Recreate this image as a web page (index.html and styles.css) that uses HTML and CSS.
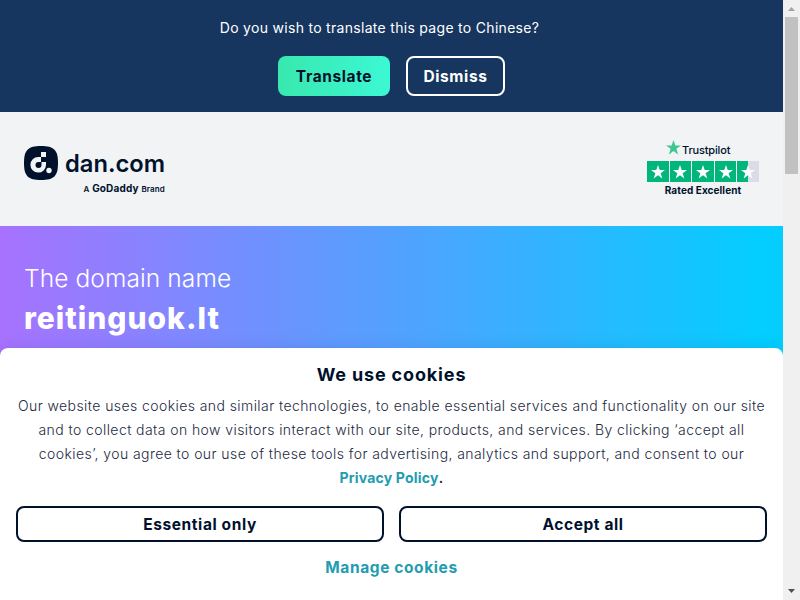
FILE: index.html
```html
<!DOCTYPE html>
<html lang="en">
<head>
    <meta charset="UTF-8">
    <meta name="viewport" content="width=device-width, initial-scale=1.0">
    <title>reitinguok.lt - dan.com</title>
    <link rel="stylesheet" href="styles.css">
</head>
<body>

<div class="page">
    <div class="translate-bar">
        <p class="translate-text">Do you wish to translate this page to Chinese?</p>
        <div class="translate-actions">
            <button class="btn btn-green">Translate</button>
            <button class="btn btn-outline-white">Dismiss</button>
        </div>
    </div>

    <header class="header">
        <a class="logo">
            <div class="logo-main">
                <svg class="logo-mark" width="34" height="34" viewBox="0 0 34 34">
                    <path d="M17 0C30 0 34 4 34 17S30 34 17 34 0 30 0 17 4 0 17 0Z" fill="#00112c"/>
                    <path d="M17 6h5v5h-5zM17 11v5h-2.500a3 3 0 1 0 3 3V16H22v3a7.800 7.800 0 1 1-7.800-8z" fill="#f1f3f5"/>
                    <circle cx="25" cy="24.500" r="2.700" fill="#f1f3f5"/>
                </svg>
                <span class="logo-name">dan.com</span>
            </div>
            <div class="logo-brand"><span>A</span> <b>GoDaddy</b> <span>Brand</span></div>
        </a>

        <div class="trustpilot">
            <div class="trustpilot-name">
                <svg width="15" height="15" viewBox="0 0 20 20"><path class="star-green" d="M10 0l2.400 7.200H20l-6.200 4.600 2.400 7.400L10 14.600l-6.200 4.600 2.400-7.400L0 7.200h7.600z"/></svg>
                <span>Trustpilot</span>
            </div>
            <div class="stars">
                <span class="star"><svg viewBox="0 0 20 20"><path d="M10 0l2.400 7.200H20l-6.200 4.600 2.400 7.400L10 14.600l-6.200 4.600 2.400-7.400L0 7.200h7.600z"/></svg></span>
                <span class="star"><svg viewBox="0 0 20 20"><path d="M10 0l2.400 7.200H20l-6.200 4.600 2.400 7.400L10 14.600l-6.200 4.600 2.400-7.400L0 7.200h7.600z"/></svg></span>
                <span class="star"><svg viewBox="0 0 20 20"><path d="M10 0l2.400 7.200H20l-6.200 4.600 2.400 7.400L10 14.600l-6.200 4.600 2.400-7.400L0 7.200h7.600z"/></svg></span>
                <span class="star"><svg viewBox="0 0 20 20"><path d="M10 0l2.400 7.200H20l-6.200 4.600 2.400 7.400L10 14.600l-6.200 4.600 2.400-7.400L0 7.200h7.600z"/></svg></span>
                <span class="star half"><svg viewBox="0 0 20 20"><path d="M10 0l2.400 7.200H20l-6.200 4.600 2.400 7.400L10 14.600l-6.200 4.600 2.400-7.400L0 7.200h7.600z"/></svg></span>
            </div>
            <div class="rated">Rated Excellent</div>
        </div>
    </header>

    <main class="hero">
        <p class="hero-label">The domain name</p>
        <h1 class="hero-domain">reitinguok.lt</h1>
    </main>

    <div class="cookies">
        <h2 class="cookies-title">We use cookies</h2>
        <p class="cookies-text">
            Our website uses cookies and similar technologies, to enable essential services and functionality on our site<br>
            and to collect data on how visitors interact with our site, products, and services. By clicking ‘accept all<br>
            cookies’, you agree to our use of these tools for advertising, analytics and support, and consent to our<br>
            <a>Privacy Policy</a><b>.</b>
        </p>
        <div class="cookies-actions">
            <button class="btn btn-cookie">Essential only</button>
            <button class="btn btn-cookie">Accept all</button>
        </div>
        <a class="manage">Manage cookies</a>
    </div>
</div>

<div class="scrollbar">
    <svg width="17" height="17" viewBox="0 0 17 17"><path d="M5 11h7L8.500 7z" fill="#a3a3a3"/></svg>
    <div class="scrollbar-thumb"></div>
    <svg class="scrollbar-down" width="17" height="17" viewBox="0 0 17 17"><path d="M5 6h7l-3.500 4z" fill="#505050"/></svg>
</div>

</body>
</html>
```
FILE: styles.css
```css
* {
    box-sizing: border-box;
}
body {
    margin: 0;
    height: 600px;
    display: flex;
    overflow: hidden;
    font-family: Inter, "Liberation Sans", sans-serif;
    color: #00112c;
}
p, h1, h2 {
    margin: 0;
}
.page {
    width: 783px;
    height: 600px;
    position: relative;
}
.translate-bar {
    height: 112px;
    padding-top: 16px;
    background-color: #16365f;
    text-align: center;
}
.translate-text {
    padding-right: 24px;
    font-size: 14px;
    line-height: 24px;
    letter-spacing: 0.300px;
    color: #fff;
}
.translate-actions {
    display: flex;
    justify-content: center;
    gap: 16px;
    margin-top: 16px;
}
.btn {
    padding: 0;
    border: 2px solid #00112c;
    border-radius: 8px;
    background: none;
    font-family: inherit;
    font-size: 15.500px;
    font-weight: 700;
    letter-spacing: 0.600px;
    color: #00112c;
}
.btn-green {
    width: 112px;
    height: 40px;
    border: none;
    background: linear-gradient(90deg, #38e8ae, #3cf8d4);
}
.btn-outline-white {
    width: 99px;
    height: 40px;
    border-color: #fff;
    color: #fff;
}
.header {
    display: flex;
    justify-content: space-between;
    height: 114px;
    padding: 28px 24px 0;
    background-color: #f1f3f5;
}
.logo {
    width: 141px;
    padding-top: 6px;
}
.logo-main {
    display: flex;
    gap: 7px;
    height: 34px;
}
.logo-mark {
    flex-shrink: 0;
}
.logo-name {
    font-size: 23.700px;
    font-weight: 600;
    line-height: 35px;
    white-space: nowrap;
}
.logo-brand {
    margin-top: 2px;
    font-size: 8px;
    font-weight: 600;
    line-height: 12px;
    letter-spacing: 0.150px;
    word-spacing: 0.600px;
    text-align: right;
    white-space: nowrap;
}
.logo-brand b {
    font-size: 10px;
    font-weight: 700;
}
.trustpilot {
    width: 112px;
}
.trustpilot-name {
    display: flex;
    gap: 1px;
    height: 21px;
    padding-left: 19px;
    font-size: 11px;
    font-weight: 500;
    line-height: 20px;
    letter-spacing: -0.150px;
}
.star-green {
    fill: #3cc78e;
}
.stars {
    display: flex;
    gap: 1px;
}
.star {
    display: flex;
    align-items: center;
    justify-content: center;
    width: 21.600px;
    height: 21px;
    background-color: #00b67a;
}
.star svg {
    width: 14px;
    height: 14px;
    fill: #fff;
}
.star.half {
    background: linear-gradient(90deg, #00b67a 50%, #dcdce6 50%);
}
.rated {
    font-size: 10px;
    font-weight: 700;
    line-height: 16px;
    letter-spacing: 0.080px;
    text-align: center;
    white-space: nowrap;
}
.hero {
    height: 374px;
    padding: 36px 24px;
    background: linear-gradient(90deg, #a772ff 0%, #04cdff 97%);
    color: #fff;
}
.hero-label {
    font-size: 24.500px;
    font-weight: 300;
    line-height: 32px;
    letter-spacing: 0.100px;
}
.hero-domain {
    font-size: 30px;
    font-weight: 800;
    line-height: 48px;
    letter-spacing: 1px;
}
/* cookie dialog sits on top of the page content */
.cookies {
    position: absolute;
    left: 0;
    right: 0;
    bottom: 0;
    height: 252px;
    padding: 15px 16px 0;
    border-radius: 8px 8px 0 0;
    background-color: #fff;
    box-shadow: 0 0 16px rgba(0, 17, 44, 0.1);
    text-align: center;
}
.cookies-title {
    font-size: 18px;
    font-weight: 700;
    line-height: 24px;
    letter-spacing: 0.850px;
}
.cookies-text {
    margin-top: 7px;
    font-size: 14px;
    font-weight: 300;
    line-height: 24px;
    letter-spacing: 0.420px;
    white-space: nowrap;
    color: #1c2a41;
}
.cookies-text a {
    font-weight: 700;
    letter-spacing: 0.200px;
    color: #229cb0;
}
.cookies-text b {
    font-weight: 600;
}
.cookies-actions {
    display: grid;
    grid-template-columns: 1fr 1fr;
    gap: 15px;
    margin-top: 16px;
}
.btn-cookie {
    height: 36px;
}
.manage {
    display: block;
    margin-top: 14px;
    font-size: 15.500px;
    font-weight: 700;
    line-height: 24px;
    letter-spacing: 0.600px;
    color: #229cb0;
}
.scrollbar {
    display: flex;
    flex-direction: column;
    align-items: center;
    width: 17px;
    height: 600px;
    background-color: #f0f0f0;
    z-index: 1;
}
.scrollbar-thumb {
    width: 13px;
    height: 157px;
    background-color: #c1c1c1;
}
.scrollbar-down {
    margin-top: auto;
}
```
